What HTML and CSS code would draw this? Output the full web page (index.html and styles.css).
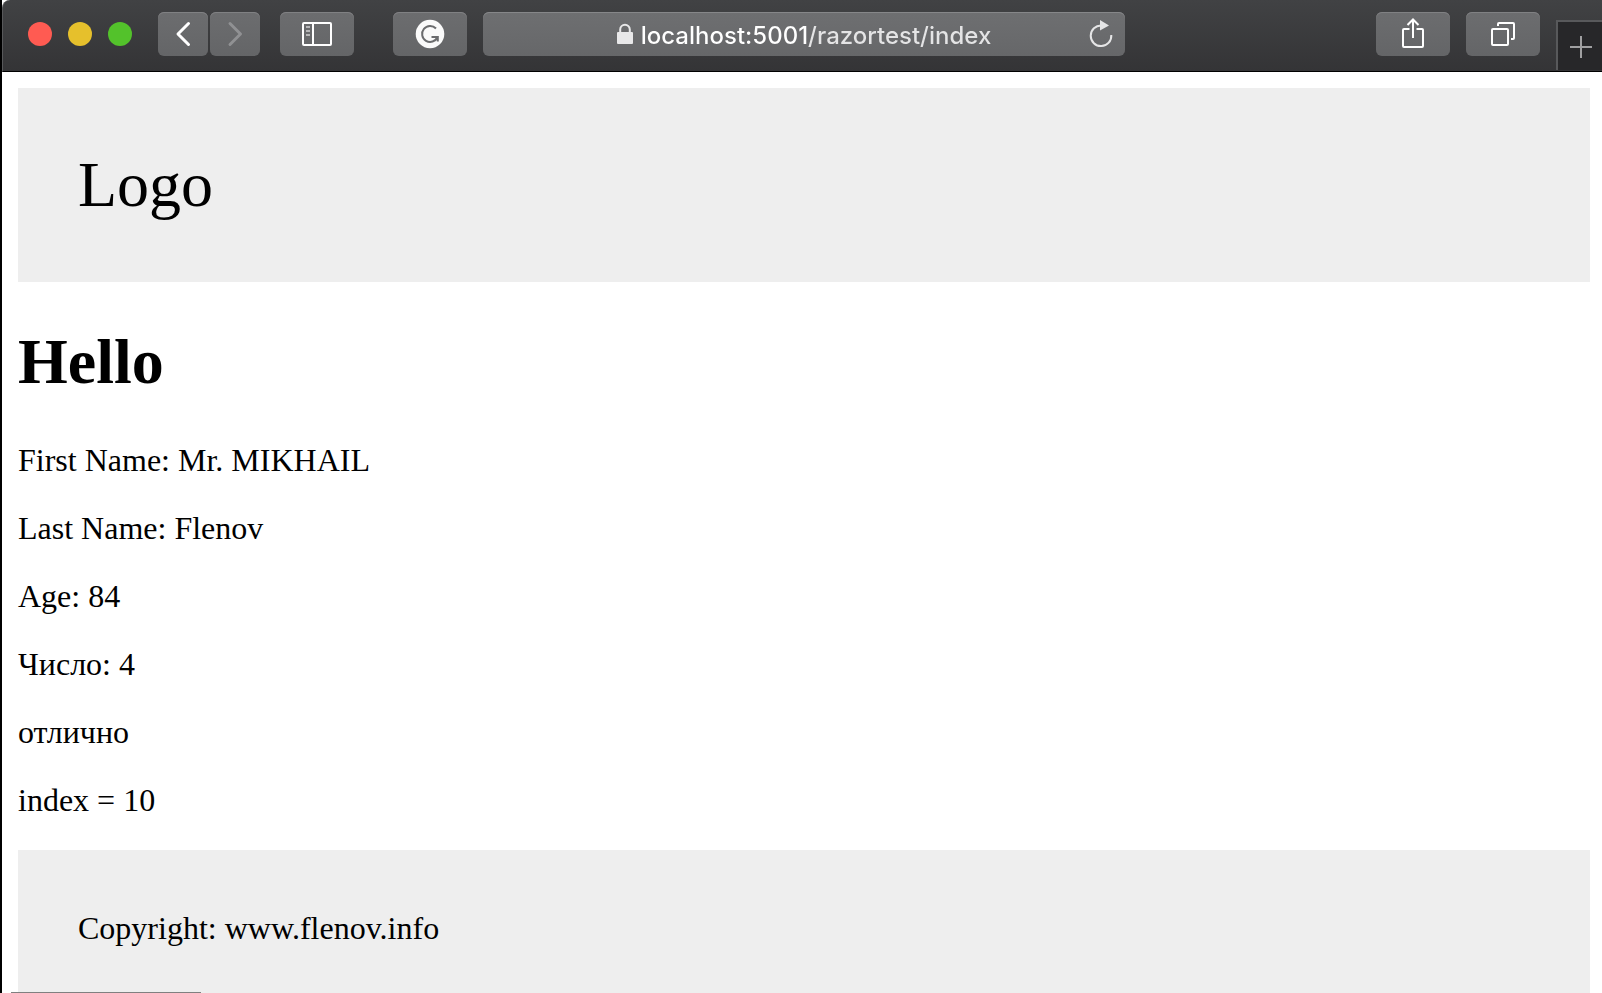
FILE: index.html
```html
<!DOCTYPE html>
<html lang="ru">
<head>
  <meta charset="UTF-8">
  <title>Razor Test</title>
  <link rel="stylesheet" href="styles.css">
</head>
<body>
<div class="window">

  <!-- Toolbar -->
  <div class="toolbar">
    <div class="lights">
      <button class="light red" aria-label="Close"></button>
      <button class="light yellow" aria-label="Minimize"></button>
      <button class="light green" aria-label="Zoom"></button>
    </div>

    <div class="nav">
      <button class="btn small" aria-label="Back">
        <svg width="50" height="44" viewBox="0 0 50 44" fill="none" stroke="#fff" stroke-width="3" stroke-linecap="round" stroke-linejoin="round"><path d="M30.500 11.500L20 22L30.500 32.500"/></svg>
      </button>
      <button class="btn small" aria-label="Forward" disabled>
        <svg width="50" height="44" viewBox="0 0 50 44" fill="none" stroke="#909193" stroke-width="3" stroke-linecap="round" stroke-linejoin="round"><path d="M20 11.500L30.500 22L20 32.500"/></svg>
      </button>
    </div>

    <button class="btn" aria-label="Sidebar">
      <svg width="74" height="44" viewBox="0 0 74 44" fill="none" stroke="#fff" stroke-width="2"><rect x="23" y="11" width="28" height="22" rx="1"/><path d="M33 11V33"/><path d="M26 15H30M26 19H30M26 23H30" stroke="#d0d0d1" stroke-width="1.500"/></svg>
    </button>

    <button class="btn extension" aria-label="Grammarly">
      <svg width="74" height="44" viewBox="0 0 74 44" fill="none"><circle cx="37" cy="22" r="14.300" fill="#fafafa"/><path d="M43 16.500A8 8 0 1 0 44.500 25H38.500M44.800 24.800V29.500" stroke="#6b6c6e" stroke-width="2"/></svg>
    </button>

    <div class="address">
      <label class="lock" for="url" aria-label="Address">
        <svg width="16" height="22" viewBox="0 0 16 22"><path d="M3.200 10V6.500A4.800 4.800 0 0 1 12.800 6.500V10" fill="none" stroke="#e8e8e9" stroke-width="2"/><rect y="9" width="16" height="12" rx="1" fill="#e8e8e9"/></svg>
      </label>
      <input class="url" id="url" type="text" value="localhost:5001/razortest/index" spellcheck="false">
      <button class="reload" aria-label="Reload">
        <svg width="24" height="28" viewBox="0 0 24 28"><path d="M12.500 5.500A10.300 10.300 0 1 0 22.300 15" fill="none" stroke="#e5e5e6" stroke-width="2"/><path d="M11 0L20 5.500L11 10.500Z" fill="#e5e5e6"/></svg>
      </button>
    </div>

    <div class="actions">
      <button class="btn" aria-label="Share">
        <svg width="74" height="44" viewBox="0 0 74 44" fill="none" stroke="#fff" stroke-width="2"><path d="M33.500 17H28Q27 17 27 18V34Q27 35 28 35H46Q47 35 47 34V18Q47 17 46 17H40.500"/><path d="M37 26V8M31.500 13L37 7.500L42.500 13"/></svg>
      </button>
      <button class="btn" aria-label="Show tabs">
        <svg width="74" height="44" viewBox="0 0 74 44" fill="none" stroke="#fff" stroke-width="2"><rect x="26" y="17" width="16" height="16" rx="1"/><path d="M32 14V12Q32 11 33 11H47Q48 11 48 12V26Q48 27 47 27H45"/></svg>
      </button>
      <button class="new-tab" aria-label="New tab">
        <svg width="22" height="22" viewBox="0 0 22 22" stroke="#a0a0a1" stroke-width="2"><path d="M11 0V22M0 11H22"/></svg>
      </button>
    </div>
  </div>

  <!-- Page -->
  <div class="page">
    <div class="box logo">Logo</div>
    <h1>Hello</h1>
    <p>First Name: Mr. MIKHAIL</p>
    <p>Last Name: Flenov</p>
    <p>Age: 84</p>
    <p>Число: 4</p>
    <p>отлично</p>
    <p>index = 10</p>
    <div class="box">Copyright: www.flenov.info</div>
  </div>

  <div class="status"></div>
</div>
</body>
</html>
```
FILE: styles.css
```css
* {
  box-sizing: border-box;
}

body {
  margin: 0;
  background: #000;
}

.window {
  position: relative;
  height: 100vh;
  overflow: hidden;
  border-left: 2px solid #000;
  background: #fff;
}

/* toolbar */
.toolbar {
  display: flex;
  align-items: flex-start;
  height: 72px;
  padding: 12px 0 0 25px;
  background: linear-gradient(to bottom, #414244, #343436);
  border-bottom: 1px solid #000;
  border-left: 1px solid #58595b;
  border-top-left-radius: 8px;
}

button {
  padding: 0;
  border: 0;
  background: none;
}

svg {
  display: block;
}

.lights {
  display: flex;
  align-items: center;
  gap: 16px;
  height: 44px;
  margin-right: 26px;
}

.light {
  width: 24px;
  height: 24px;
  border-radius: 50%;
}

.red {
  background: #ff5b52;
}

.yellow {
  background: #e6c02c;
}

.green {
  background: #53c22b;
}

.nav {
  display: flex;
  gap: 2px;
  margin-right: 20px;
}

.btn {
  flex: none;
  width: 74px;
  height: 44px;
  border-radius: 6px;
  background: linear-gradient(to bottom, #6c6d6f, #646567);
  box-shadow: inset 0 1px 0 #808183;
}

.btn.small {
  width: 50px;
}

.extension {
  margin: 0 16px 0 39px;
}

.address {
  position: relative;
  display: flex;
  flex: 1;
  align-items: center;
  justify-content: center;
  gap: 8px;
  max-width: 642px;
  height: 44px;
  border-radius: 6px;
  background: linear-gradient(to bottom, #6e6f71, #666769);
  box-shadow: inset 0 1px 0 #868789;
}

.url {
  field-sizing: content;
  min-width: 0;
  height: 36px;
  padding: 2px 0 0;
  border: 0;
  outline: 0;
  font: 500 24px Inter, Roboto, sans-serif;
  /* the path is a bit dimmer than the host */
  color: transparent;
  background: linear-gradient(to right, #fff 48%, #e4e4e5 48%);
  -webkit-background-clip: text;
  background-clip: text;
}

.reload {
  position: absolute;
  top: 8px;
  right: 12px;
}

.actions {
  display: flex;
  gap: 16px;
  margin-left: auto;
}

.new-tab {
  display: flex;
  align-items: center;
  justify-content: center;
  width: 46px;
  height: 50px;
  margin-top: 8px;
  padding: 2px 0 0 2px;
  border-top: 2px solid #58595b;
  border-left: 2px solid #58595b;
  background: #272729;
}

/* page content */
.page {
  padding: 16px 12px 16px 16px;
  color: #000;
  font: 32px/36px "Liberation Serif", "Times New Roman", serif;
}

.box {
  padding: 60px;
  background: #eee;
}

.logo {
  font-size: 64px;
  line-height: 74px;
}

h1 {
  margin: 43px 0;
  font-size: 64px;
  line-height: 74px;
}

p {
  margin: 32px 0;
}

/* top edge of the status bar */
.status {
  position: absolute;
  bottom: 0;
  left: 9px;
  width: 190px;
  height: 1px;
  background: #808080;
}
```
